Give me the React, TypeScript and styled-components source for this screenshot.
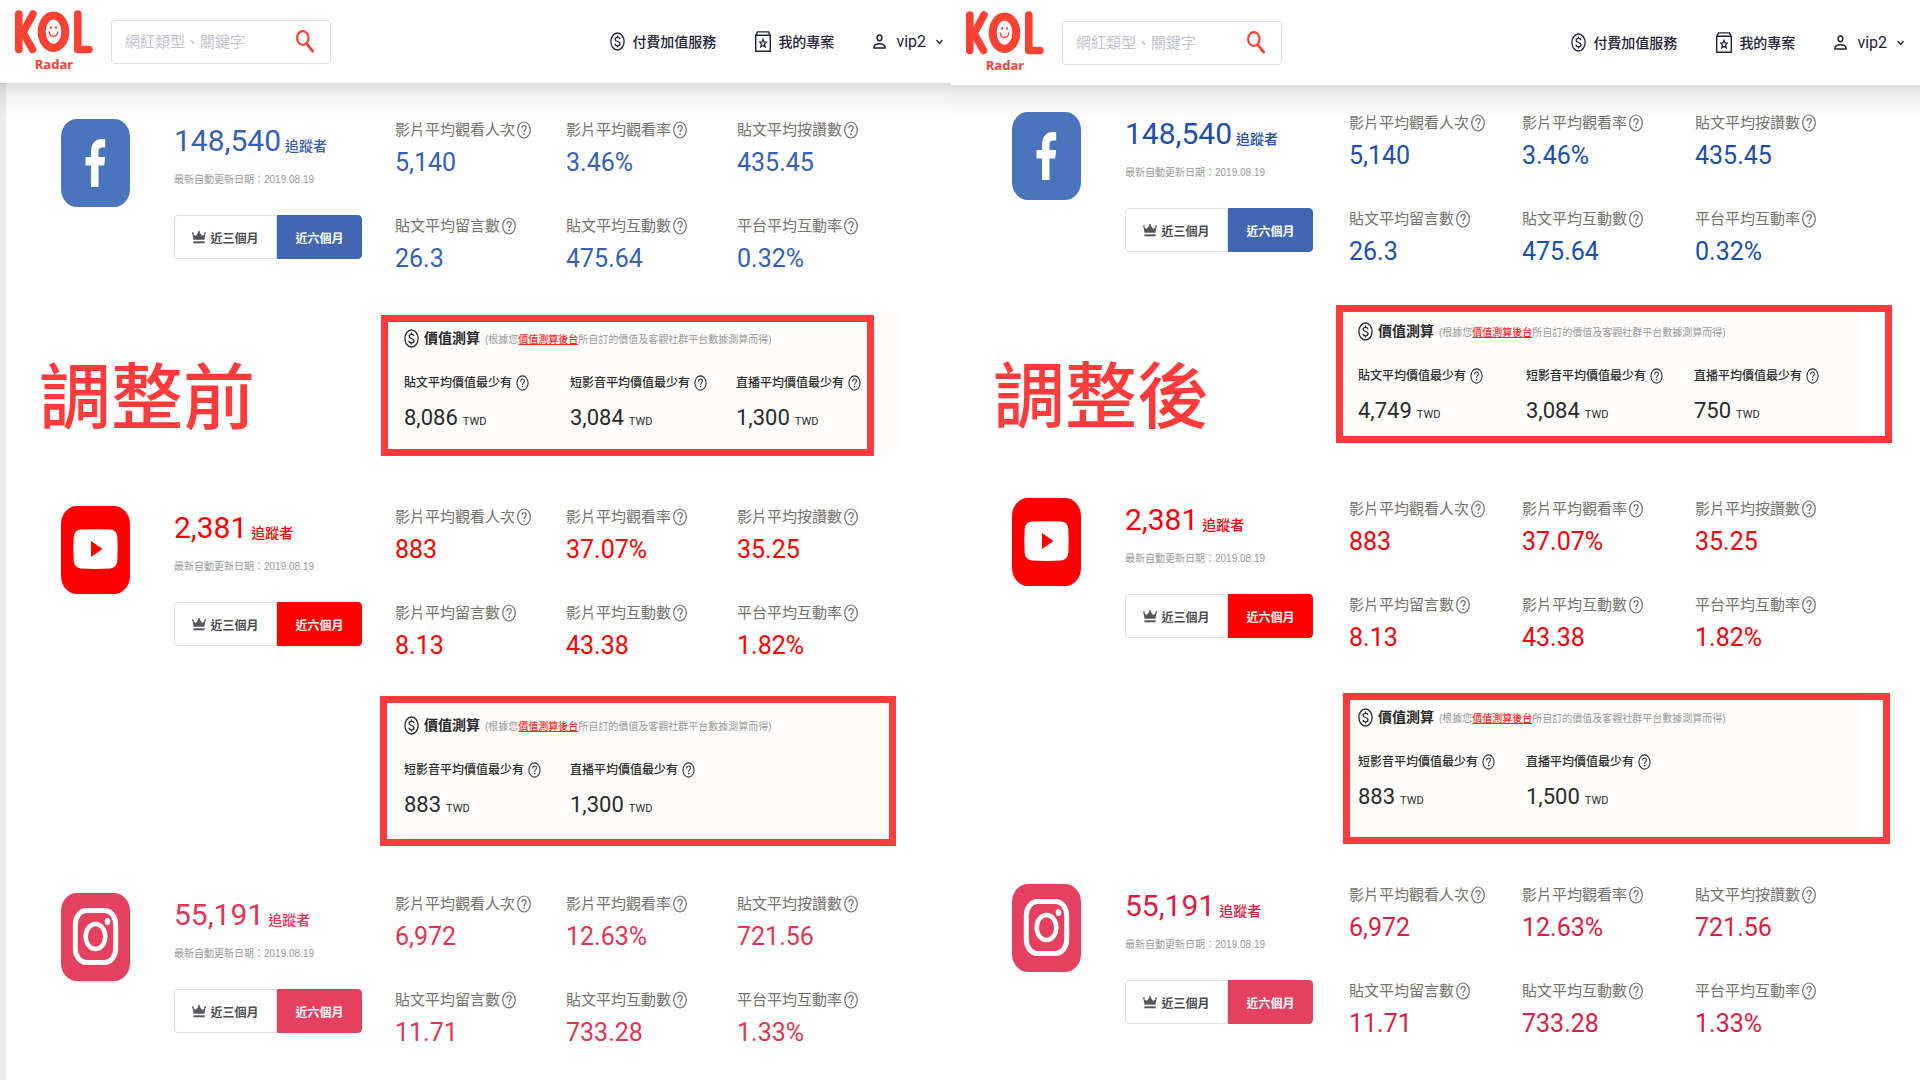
import React from "react";
import styled, { createGlobalStyle } from "styled-components";

const sans = `"Roboto", "Noto Sans CJK TC", sans-serif`;
const MARK = "#ff3b3b";

const GlobalStyle = createGlobalStyle`
  * { box-sizing: border-box; }
  body { margin: 0; background: #fff; font-family: ${sans}; color: #222; overflow-x: hidden; }
  button, input { font-family: inherit; }
  svg { display: block; flex: none; }
`;

type Side = "before" | "after";

const Page = styled.main`
  display: grid;
  grid-template-columns: minmax(0, 951fr) minmax(0, 969fr);
  min-height: 100vh;
`;

const Panel = styled.section`
  display: flex;
  flex-direction: column;
`;

const Header = styled.header<{ $side: Side }>`
  position: relative;
  display: flex;
  align-items: center;
  height: ${(p) => (p.$side === "before" ? 83 : 85)}px;
  padding: 0 ${(p) => (p.$side === "before" ? 8 : 16)}px 0 14px;
  background: #fff;
  &::after {
    content: "";
    position: absolute;
    inset: 100% 0 auto 0;
    height: 34px;
    background: linear-gradient(rgba(0, 0, 0, 0.13), rgba(0, 0, 0, 0.05) 40%, rgba(0, 0, 0, 0));
    pointer-events: none;
  }
`;

const LogoLink = styled.a`
  display: flex;
  flex-direction: column;
  align-items: center;
  width: 80px;
  color: #f94234;
  text-decoration: none;
`;

const LogoName = styled.span`
  font: 700 13px/20px "Open Sans", sans-serif;
`;

const Search = styled.form`
  display: flex;
  align-items: center;
  width: 220px;
  height: 44px;
  margin-left: 17px;
  padding: 0 16px 0 13px;
  border: 1px solid #dcdfe6;
  border-radius: 4px;
`;

const SearchInput = styled.input`
  flex: 1;
  min-width: 0;
  padding: 0;
  border: 0;
  outline: 0;
  background: none;
  font-size: 15px;
  line-height: 22px;
  &::placeholder { color: #bfc3cc; opacity: 1; }
`;

const IconButton = styled.button`
  padding: 0;
  border: 0;
  background: none;
`;

const Nav = styled.nav`
  display: flex;
  align-items: center;
  gap: 39px;
  margin-left: auto;
`;

const NavLink = styled.a`
  display: flex;
  align-items: center;
  gap: 7px;
  color: #1f2238;
  font-size: 14px;
  font-weight: 500;
  line-height: 22px;
  text-decoration: none;
`;

const UserButton = styled.button`
  display: flex;
  align-items: center;
  gap: 10px;
  padding: 0;
  border: 0;
  background: none;
  color: #1f2238;
  font-size: 16px;
  line-height: 22px;
`;

const Body = styled.div<{ $side: Side }>`
  flex: 1;
  display: flex;
  flex-direction: column;
  gap: ${(p) => (p.$side === "before" ? 54 : 53)}px;
  padding: ${(p) => (p.$side === "before" ? "36px 50px 0 55px" : "27px 59px 0 61px")};
  border-left: ${(p) => (p.$side === "before" ? "6px solid #ececec" : "0")};
`;

const Platform = styled.article<{ $side: Side }>`
  position: relative;
  display: grid;
  grid-template-columns: 113px ${(p) => (p.$side === "before" ? 213 : 216)}px minmax(0, 1fr);
  align-items: start;
`;

const Tag = styled.strong<{ $side: Side }>`
  position: absolute;
  top: ${(p) => (p.$side === "before" ? 237 : 243)}px;
  left: ${(p) => (p.$side === "before" ? -22 : -19)}px;
  color: ${MARK};
  font: 500 72px/72px "Noto Sans CJK TC", sans-serif;
`;

const Info = styled.div`
  display: flex;
  flex-direction: column;
  align-items: flex-start;
`;

const Followers = styled.h2<{ $color: string }>`
  display: flex;
  align-items: baseline;
  gap: 4px;
  margin: 2px 0 0;
  color: ${(p) => p.$color};
  font-size: 30px;
  font-weight: 400;
  line-height: 40px;
`;

const FollowersUnit = styled.span`
  font-size: 14px;
  font-weight: 500;
`;

const Updated = styled.p`
  margin: 5px 0 26px;
  color: #999;
  font: 400 10px/18px "Liberation Sans", "Noto Sans CJK TC", sans-serif;
`;

const Periods = styled.div`
  display: flex;
`;

const Period = styled.button<{ $fill?: string }>`
  display: flex;
  align-items: center;
  justify-content: center;
  gap: 4px;
  width: ${(p) => (p.$fill ? 85 : 103)}px;
  height: 44px;
  padding: 0;
  border: 1px solid ${(p) => p.$fill || "#dcdfe6"};
  border-radius: ${(p) => (p.$fill ? "0 4px 4px 0" : "4px 0 0 4px")};
  background: ${(p) => p.$fill || "#fff"};
  color: ${(p) => (p.$fill ? "#fff" : "#4a4c50")};
  font-size: 12px;
  font-weight: 700;
`;

const Metrics = styled.dl<{ $side: Side }>`
  display: grid;
  grid-template-columns: repeat(3, ${(p) => (p.$side === "before" ? 171 : 173)}px);
  row-gap: 36px;
  margin: 0;
  padding-left: 8px;
`;

const MetricLabel = styled.dt`
  display: flex;
  align-items: center;
  gap: 2px;
  color: #74726e;
  font-size: 15px;
  line-height: 22px;
  white-space: nowrap;
`;

const MetricValue = styled.dd<{ $color: string }>`
  margin: 6px 0 0;
  color: ${(p) => p.$color};
  font-size: 25px;
  line-height: 32px;
`;

const Estimate = styled.section`
  position: relative;
  height: 141px;
  margin-top: 36px;
  padding: 16px 0 0 17px;
  background: #fffdfc;
`;

const Frame = styled.div<{ $inset: string }>`
  position: absolute;
  inset: ${(p) => p.$inset};
  border: 7px solid ${MARK};
  pointer-events: none;
`;

const EstimateHead = styled.header`
  display: flex;
  align-items: center;
  gap: 5px;
  color: #2a2a2a;
`;

const EstimateTitle = styled.h3`
  margin: 0;
  font-size: 14px;
  font-weight: 700;
  line-height: 22px;
`;

const EstimateNote = styled.small`
  padding-top: 4px;
  color: #999;
  font: 400 10px/18px "Liberation Sans", "Noto Sans CJK TC", sans-serif;
  white-space: nowrap;
`;

const NoteLink = styled.a`
  color: #ff2a1f;
  font-weight: 500;
  text-decoration: underline;
`;

const Prices = styled.dl<{ $side: Side }>`
  display: grid;
  grid-template-columns: repeat(3, ${(p) => (p.$side === "before" ? 166 : 168)}px);
  margin: 25px 0 0;
`;

const PriceLabel = styled.dt`
  display: flex;
  align-items: center;
  gap: 4px;
  color: #2a2a2a;
  font-size: 12px;
  font-weight: 500;
  line-height: 18px;
  white-space: nowrap;
`;

const PriceValue = styled.dd`
  display: flex;
  align-items: baseline;
  gap: 5px;
  margin: 11px 0 0;
  color: #2a2a2a;
  font-size: 22px;
  line-height: 30px;
`;

const Currency = styled.span`
  font-size: 11px;
`;

const Logo = () => (
  <svg width="80" height="45" viewBox="0 0 80 45" fill="none" stroke="#f94234" strokeWidth="7.600" strokeLinecap="round" strokeLinejoin="round" aria-hidden="true">
    <line x1="4.800" y1="5" x2="4.800" y2="40.500" />
    <polyline points="19,5 9,23.500 18.500,40.500" />
    <polyline points="63.800,5 63.800,40.500 75,40.500" />
    <ellipse cx="39.500" cy="22.700" rx="11.800" ry="16.200" strokeWidth="8" />
    <g strokeWidth="1.500">
      <circle cx="37" cy="18.500" r=".5" />
      <circle cx="42" cy="18.500" r=".5" />
      <path d="M35.200 23c.8 6 7.800 6 8.600 0" />
    </g>
  </svg>
);

const SearchIcon = () => (
  <svg width="18" height="23" viewBox="0 0 18 23" fill="none" stroke="#f94234" strokeWidth="2.200" strokeLinecap="round">
    <ellipse cx="6.800" cy="8" rx="5.700" ry="6.900" />
    <path d="M10.800 13.800 16.600 21.200" strokeWidth="2.800" />
  </svg>
);

const DollarIcon = () => (
  <svg width="15" height="19" viewBox="0 0 15 19" fill="none" stroke="currentColor" strokeWidth="1.300">
    <ellipse cx="7.500" cy="9.500" rx="6.600" ry="8.500" />
    <path d="M9.900 7.200C9.700 5.900 8.800 5.300 7.500 5.300S5.200 6 5.200 7.300c0 3 4.800 1.400 4.800 4.400 0 1.300-1 2.100-2.500 2.100S5.100 13.100 5 11.700M7.500 3.600v1.700M7.500 13.800v1.700" />
  </svg>
);

const ProjectIcon = () => (
  <svg width="16" height="21" viewBox="0 0 16 21" fill="none" stroke="currentColor" strokeWidth="1.400">
    <path d="M.7 4.300h14.600v15.900H.7zM.9 4.300 2.500.9h11l1.600 3.400" />
    <path d="m8 8.300 1 2.600 2.300.2-1.700 2 .6 2.800L8 14.400l-2.200 1.500.6-2.800-1.700-2 2.300-.2z" strokeWidth="1.200" />
  </svg>
);

const UserIcon = () => (
  <svg width="13" height="15" viewBox="0 0 13 15" fill="none" stroke="currentColor" strokeWidth="1.500">
    <ellipse cx="6.500" cy="3.800" rx="2.400" ry="2.900" />
    <path d="M1 14v-1.200C1.400 10.500 4 9.700 6.500 9.700s5.100.8 5.500 3.100V14z" />
  </svg>
);

const ChevronIcon = () => (
  <svg width="7" height="6" viewBox="0 0 7 6" fill="none" stroke="currentColor" strokeWidth="1.200">
    <path d="m.5 1 3 3.500 3-3.500" />
  </svg>
);

const CrownIcon = () => (
  <svg width="14" height="13" viewBox="0 0 14 13" fill="#55575c">
    <path d="M1.600 8.800.4 2.400l3.300 2.500L7 .8l3.300 4.100 3.300-2.500-1.200 6.400z" />
    <circle cx=".9" cy="2.200" r=".9" />
    <circle cx="7" cy="1" r="1" />
    <circle cx="13.100" cy="2.200" r=".9" />
    <path d="M1.400 10.300h11.200v2H1.400z" />
  </svg>
);

const HelpIcon = ({ w = 14, h = 18 }: { w?: number; h?: number }) => (
  <svg width={w} height={h} viewBox="0 0 14 18" fill="none" stroke="currentColor" strokeWidth="1.200">
    <ellipse cx="7" cy="9" rx="6.300" ry="8" />
    <path d="M4.900 7.200c0-1.700.9-2.600 2.200-2.600s2.100.9 2.100 2.200C9.200 8.600 7.100 8.900 7.100 11" />
    <path d="M7.100 12.300v1.600" strokeWidth="1.400" />
  </svg>
);

type Brand = "facebook" | "youtube" | "instagram";

const brandColor: Record<Brand, { tile: string; button: string; before: string; after: string }> = {
  facebook: { tile: "#4a75bd", button: "#4166b2", before: "#3860b2", after: "#1f4ea9" },
  youtube: { tile: "#ff0000", button: "#ff0000", before: "#ff0000", after: "#f5000c" },
  instagram: { tile: "#e4405f", button: "#e4405f", before: "#e23556", after: "#dd1c45" },
};

const BrandIcon = ({ brand }: { brand: Brand }) => (
  <svg width="69" height="88" viewBox="0 0 69 88" role="img" aria-label={brand}>
    <rect width="69" height="88" rx="16" ry="18" fill={brandColor[brand].tile} />
    {brand === "facebook" && (
      <path fill="#fff" d="M30 68V46.500h-5.500V38H30v-4.500C30 24.500 34 20 41 20h3.200v8.500H41c-2.500 0-3.500 1.500-3.500 4V38h6.700l-1 8.500h-5.700V68z" />
    )}
    {brand === "youtube" && (
      <>
        <path fill="#fff" d="M20 23.600Q34.500 22.800 49 23.600 55.500 24 56.300 31q.8 12 0 24-.8 7-7.300 7.500-14.500.8-29 0Q13.500 62 12.700 55q-.8-12 0-24 .8-7 7.300-7.400z" />
        <path fill="#f00" d="M30 35v16l11.500-8z" />
      </>
    )}
    {brand === "instagram" && (
      <>
        <rect x="14.300" y="17.500" width="40.400" height="52" rx="11" ry="14" fill="none" stroke="#fff" strokeWidth="5" />
        <ellipse cx="34.500" cy="43.500" rx="9.800" ry="12.600" fill="none" stroke="#fff" strokeWidth="4.500" />
        <ellipse cx="46.500" cy="28.500" rx="2.800" ry="3.500" fill="#fff" />
      </>
    )}
  </svg>
);

type Pair = [string, string];
interface PlatformData {
  brand: Brand;
  followers: string;
  metrics: Pair[];
  prices?: Record<Side, Pair[]>;
  frame?: Record<Side, string>;
}

const platforms: PlatformData[] = [
  {
    brand: "facebook",
    followers: "148,540",
    metrics: [
      ["影片平均觀看人次", "5,140"], ["影片平均觀看率", "3.46%"], ["貼文平均按讚數", "435.45"],
      ["貼文平均留言數", "26.3"], ["貼文平均互動數", "475.64"], ["平台平均互動率", "0.32%"],
    ],
    prices: {
      before: [["貼文平均價值最少有", "8,086"], ["短影音平均價值最少有", "3,084"], ["直播平均價值最少有", "1,300"]],
      after: [["貼文平均價值最少有", "4,749"], ["短影音平均價值最少有", "3,084"], ["直播平均價值最少有", "750"]],
    },
    frame: { before: "4px 27px -4px -6px", after: "1px -31px 2px -5px" },
  },
  {
    brand: "youtube",
    followers: "2,381",
    metrics: [
      ["影片平均觀看人次", "883"], ["影片平均觀看率", "37.07%"], ["影片平均按讚數", "35.25"],
      ["影片平均留言數", "8.13"], ["影片平均互動數", "43.38"], ["平台平均互動率", "1.82%"],
    ],
    prices: {
      before: [["短影音平均價值最少有", "883"], ["直播平均價值最少有", "1,300"]],
      after: [["短影音平均價值最少有", "883"], ["直播平均價值最少有", "1,500"]],
    },
    frame: { before: "-2px 5px -7px -7px", after: "3px -29px -13px 2px" },
  },
  {
    brand: "instagram",
    followers: "55,191",
    metrics: [
      ["影片平均觀看人次", "6,972"], ["影片平均觀看率", "12.63%"], ["貼文平均按讚數", "721.56"],
      ["貼文平均留言數", "11.71"], ["貼文平均互動數", "733.28"], ["平台平均互動率", "1.33%"],
    ],
  },
];

const PlatformRow = ({ data, side, tag }: { data: PlatformData; side: Side; tag?: string }) => {
  const colors = brandColor[data.brand];
  return (
    <Platform $side={side}>
      <BrandIcon brand={data.brand} />
      <Info>
        <Followers $color={colors[side]}>
          {data.followers}
          <FollowersUnit>追蹤者</FollowersUnit>
        </Followers>
        <Updated>最新自動更新日期：2019.08.19</Updated>
        <Periods>
          <Period type="button"><CrownIcon />近三個月</Period>
          <Period type="button" $fill={colors.button}>近六個月</Period>
        </Periods>
      </Info>
      <div>
        <Metrics $side={side}>
          {data.metrics.map(([label, value]) => (
            <div key={label}>
              <MetricLabel>{label}<HelpIcon /></MetricLabel>
              <MetricValue $color={colors[side]}>{value}</MetricValue>
            </div>
          ))}
        </Metrics>
        {data.prices && data.frame && (
          <Estimate>
            <EstimateHead>
              <DollarIcon />
              <EstimateTitle>價值測算</EstimateTitle>
              <EstimateNote>
                (根據您<NoteLink href="#values">價值測算後台</NoteLink>所自訂的價值及客觀社群平台數據測算而得)
              </EstimateNote>
            </EstimateHead>
            <Prices $side={side}>
              {data.prices[side].map(([label, value]) => (
                <div key={label}>
                  <PriceLabel>{label}<HelpIcon w={13} h={16} /></PriceLabel>
                  <PriceValue>{value}<Currency>TWD</Currency></PriceValue>
                </div>
              ))}
            </Prices>
            <Frame $inset={data.frame[side]} />
          </Estimate>
        )}
      </div>
      {tag && <Tag $side={side}>{tag}</Tag>}
    </Platform>
  );
};

const Dashboard = ({ side, tag }: { side: Side; tag: string }) => (
  <Panel>
    <Header $side={side}>
      <LogoLink href="#home" aria-label="KOL Radar">
        <Logo />
        <LogoName>Radar</LogoName>
      </LogoLink>
      <Search>
        <SearchInput type="text" aria-label="網紅類型、關鍵字" placeholder="網紅類型、關鍵字" />
        <IconButton type="button" aria-label="搜尋"><SearchIcon /></IconButton>
      </Search>
      <Nav>
        <NavLink href="#services"><DollarIcon />付費加值服務</NavLink>
        <NavLink href="#projects"><ProjectIcon />我的專案</NavLink>
        <UserButton type="button"><UserIcon />vip2<ChevronIcon /></UserButton>
      </Nav>
    </Header>
    <Body $side={side}>
      {platforms.map((p, i) => (
        <PlatformRow key={p.brand} data={p} side={side} tag={i === 0 ? tag : undefined} />
      ))}
    </Body>
  </Panel>
);

export default function App() {
  return (
    <>
      <GlobalStyle />
      <Page>
        <Dashboard side="before" tag="調整前" />
        <Dashboard side="after" tag="調整後" />
      </Page>
    </>
  );
}
